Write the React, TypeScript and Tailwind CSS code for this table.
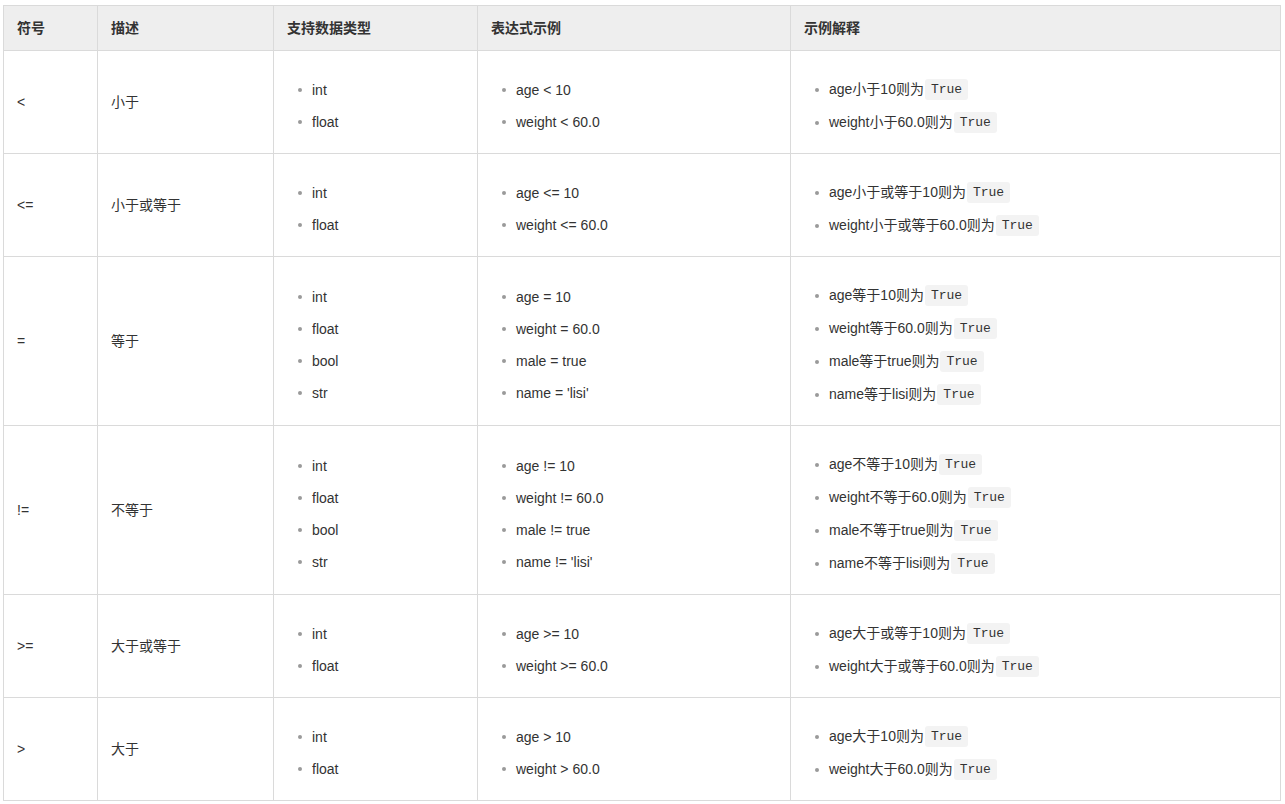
const ROWS = [
  {
    op: "<",
    desc: "小于",
    types: ["int", "float"],
    exprs: ["age < 10", "weight < 60.0"],
    notes: ["age小于10则为", "weight小于60.0则为"],
  },
  {
    op: "<=",
    desc: "小于或等于",
    types: ["int", "float"],
    exprs: ["age <= 10", "weight <= 60.0"],
    notes: ["age小于或等于10则为", "weight小于或等于60.0则为"],
  },
  {
    op: "=",
    desc: "等于",
    types: ["int", "float", "bool", "str"],
    exprs: ["age = 10", "weight = 60.0", "male = true", "name = 'lisi'"],
    notes: ["age等于10则为", "weight等于60.0则为", "male等于true则为", "name等于lisi则为"],
  },
  {
    op: "!=",
    desc: "不等于",
    types: ["int", "float", "bool", "str"],
    exprs: ["age != 10", "weight != 60.0", "male != true", "name != 'lisi'"],
    notes: ["age不等于10则为", "weight不等于60.0则为", "male不等于true则为", "name不等于lisi则为"],
  },
  {
    op: ">=",
    desc: "大于或等于",
    types: ["int", "float"],
    exprs: ["age >= 10", "weight >= 60.0"],
    notes: ["age大于或等于10则为", "weight大于或等于60.0则为"],
  },
  {
    op: ">",
    desc: "大于",
    types: ["int", "float"],
    exprs: ["age > 10", "weight > 60.0"],
    notes: ["age大于10则为", "weight大于60.0则为"],
  },
];

const HEADERS = ["符号", "描述", "支持数据类型", "表达式示例", "示例解释"];
const WIDTHS = ["w-[94px]", "w-[176px]", "w-[204px]", "w-[313px]", "w-[490px]"];

function Bullet() {
  return <span className="mr-[10px] inline-block h-[4px] w-[4px] shrink-0 rounded-full bg-[#9a9a9a]" />;
}

function PlainList({ items }: { items: string[] }) {
  return (
    <ul className="pl-[11px] pt-[22px] pb-[14px]">
      {items.map((item) => (
        <li key={item} className="flex h-[32px] items-center whitespace-pre">
          <Bullet />
          {item}
        </li>
      ))}
    </ul>
  );
}

// explanation column: each line ends with an inline code badge
function NoteList({ items }: { items: string[] }) {
  return (
    <ul className="pl-[11px] pt-[22px] pb-[14px]">
      {items.map((item) => (
        <li key={item} className="flex h-[33px] items-center whitespace-pre">
          <Bullet />
          {item}
          <code className="ml-[1px] rounded-[3px] bg-[#f3f3f3] px-[6px] font-['Liberation_Mono','DejaVu_Sans_Mono',monospace] text-[13px] leading-[21px] text-[#333]">
            True
          </code>
        </li>
      ))}
    </ul>
  );
}

export default function App() {
  return (
    <div className="min-h-[804px] bg-white pt-[5px] pl-[3px] font-['Liberation_Sans','Noto_Sans_CJK_SC',sans-serif] text-[14px] text-[#333]">
      <table className="w-[1278px] table-fixed border-collapse">
        <thead>
          <tr className="h-[45px] bg-[#eeeeee]">
            {HEADERS.map((h, i) => (
              <th
                key={h}
                className={`${WIDTHS[i]} border border-[#dadada] px-[13px] text-left align-middle font-bold`}
              >
                {h}
              </th>
            ))}
          </tr>
        </thead>
        <tbody>
          {ROWS.map((r) => (
            <tr key={r.op}>
              <td className="border border-[#dadada] px-[13px] align-middle">{r.op}</td>
              <td className="border border-[#dadada] px-[13px] align-middle">{r.desc}</td>
              <td className="border border-[#dadada] px-[13px] align-middle">
                <PlainList items={r.types} />
              </td>
              <td className="border border-[#dadada] px-[13px] align-middle">
                <PlainList items={r.exprs} />
              </td>
              <td className="border border-[#dadada] px-[13px] align-middle">
                <NoteList items={r.notes} />
              </td>
            </tr>
          ))}
        </tbody>
      </table>
    </div>
  );
}
